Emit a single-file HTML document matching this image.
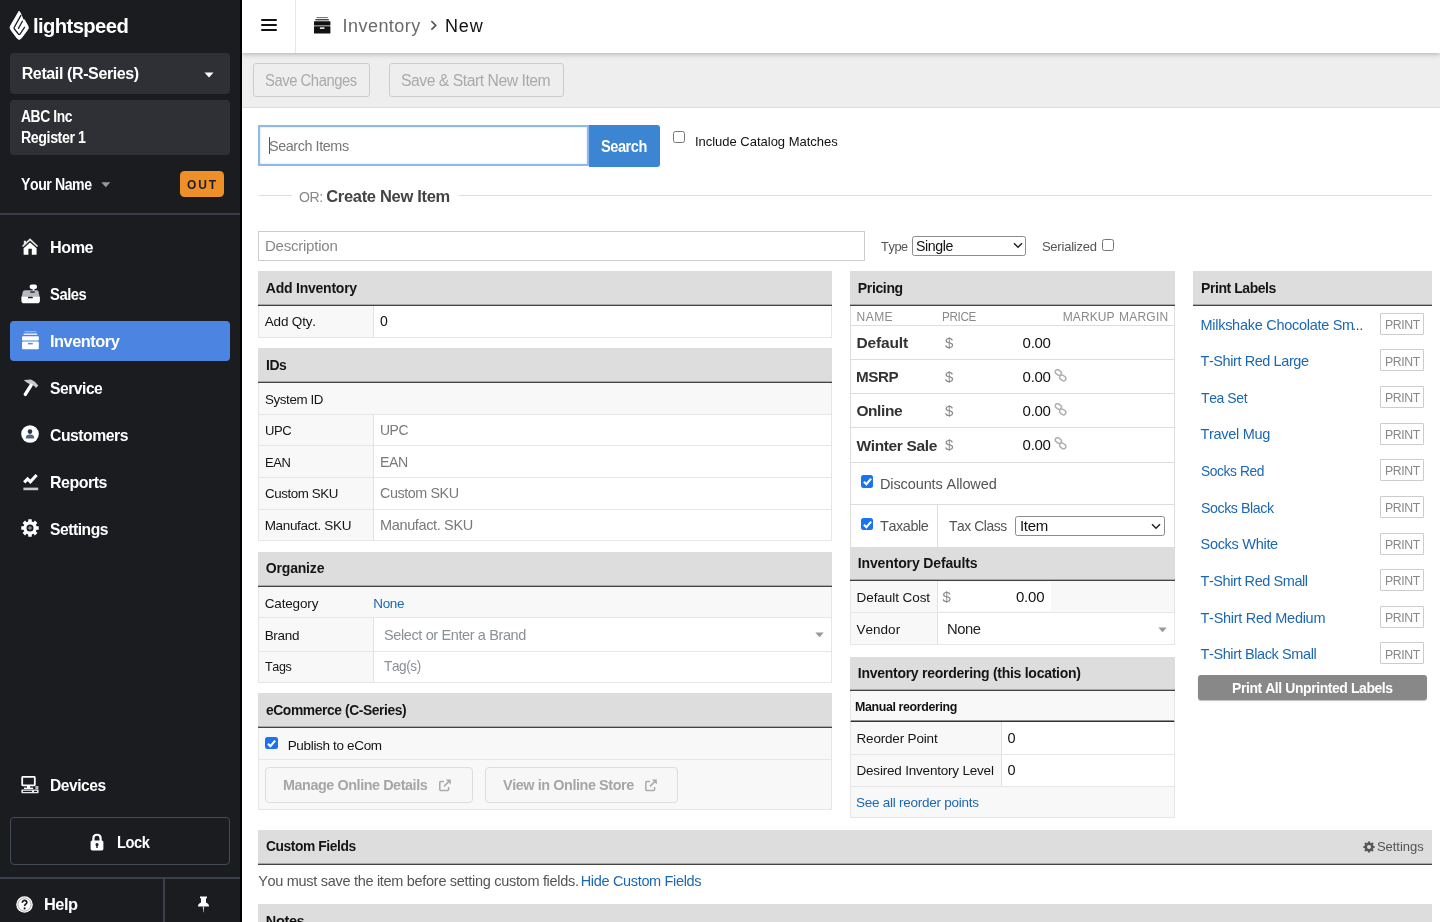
<!DOCTYPE html>
<html lang="en">
<head>
<meta charset="utf-8">
<title>Inventory - New</title>
<style>
*{box-sizing:border-box;margin:0;padding:0}
html,body{width:1440px;height:922px;overflow:hidden;background:#fff}
body{font-family:"Liberation Sans",sans-serif;font-size:14px;color:#222;position:relative}
.t{position:absolute;white-space:nowrap;line-height:1.2;font-kerning:none}
#main{position:absolute;left:0;top:0;width:1440px;height:922px;will-change:transform}
#side{position:absolute;left:0;top:0;width:242px;height:922px;background:#1b1c20;border-right:2px solid #000;color:#fff;z-index:5;will-change:transform}
.hd{background:#ddd;border-bottom:1px solid #444;box-shadow:inset 0 -1px 0 #a8a8a8}
.rw{background:#f8f8f8;border:1px solid #e6e6e6;border-top:none}
</style>
</head>
<body>
<div id="side">
<svg style="position:absolute;left:9px;top:10px" width="21" height="32" viewBox="0 0 21 32"><path d="M10.1,1.2 L1.5,16 Q0.5,17.8 1.7,19.5 L8.2,28.3 Q10.2,30.6 12.2,28.3 L18.7,19.5 Q19.9,17.8 18.9,16 L15.2,9.6 L14.2,10 L11.8,4 Z" fill="#fff" stroke="#fff" stroke-width="1" stroke-linejoin="round"/><path d="M11.9,5.4 L5.2,17.4 Q4.8,18.2 5.4,19 L9.4,24 Q10.3,25 11.2,23.8 L15.5,17.3" fill="none" stroke="#1b1c20" stroke-width="1.25" stroke-linecap="round" stroke-linejoin="round"/><path d="M13.4,11.2 L9.4,18.4" fill="none" stroke="#1b1c20" stroke-width="1.25" stroke-linecap="round"/></svg>
<div class="t" style="left:32.5px;top:13.0px;font-size:21px;letter-spacing:-0.63px;font-weight:bold;color:#fff;transform:scaleX(0.9639);transform-origin:0 0;">lightspeed</div>
<div style="position:absolute;left:10px;top:53px;width:220px;height:41px;background:#2f3035;border-radius:4px"></div>
<div class="t" style="left:21.7px;top:64.0px;font-size:16px;letter-spacing:-0.38px;font-weight:bold;color:#fff;">Retail (R-Series)</div>
<svg style="position:absolute;left:204px;top:72px" width="10" height="6" viewBox="0 0 10 6"><path d="M0.5,0.5 H9.5 L5,5.5 Z" fill="#fff"/></svg>
<div style="position:absolute;left:10px;top:100px;width:220px;height:55px;background:#2f3035;border-radius:4px"></div>
<div class="t" style="left:21.2px;top:107.0px;font-size:16px;letter-spacing:-0.48px;font-weight:bold;color:#fff;transform:scaleX(0.8671);transform-origin:0 0;">ABC Inc</div>
<div class="t" style="left:21.2px;top:128.0px;font-size:16px;letter-spacing:-0.48px;font-weight:bold;color:#fff;transform:scaleX(0.8893);transform-origin:0 0;">Register 1</div>
<div class="t" style="left:21.2px;top:175.0px;font-size:16px;letter-spacing:-0.48px;font-weight:bold;color:#fff;transform:scaleX(0.8806);transform-origin:0 0;">Your Name</div>
<svg style="position:absolute;left:101px;top:182px" width="10" height="6" viewBox="0 0 10 6"><path d="M0.3,0.3 H9.3 L4.8,5.3 Z" fill="#999"/></svg>
<div style="position:absolute;left:180px;top:171px;width:44px;height:26px;background:#ee8f27;border-radius:4.5px"></div>
<div class="t" style="left:187.0px;top:178.0px;font-size:12px;letter-spacing:1.89px;font-weight:bold;color:#1b1e30;">OUT</div>
<div style="position:absolute;left:0px;top:213px;width:240px;height:2px;background:#383c48"></div>
<div style="position:absolute;left:10px;top:321px;width:220px;height:40px;background:#4c85e1;border-radius:4px"></div>
<div class="t" style="left:50.0px;top:238.0px;font-size:17px;letter-spacing:-0.51px;font-weight:bold;color:#fff;transform:scaleX(0.9544);transform-origin:0 0;">Home</div>
<div class="t" style="left:50.0px;top:285.0px;font-size:17px;letter-spacing:-0.51px;font-weight:bold;color:#fff;transform:scaleX(0.8687);transform-origin:0 0;">Sales</div>
<div class="t" style="left:50.0px;top:332.0px;font-size:17px;letter-spacing:-0.51px;font-weight:bold;color:#fff;transform:scaleX(0.9639);transform-origin:0 0;">Inventory</div>
<div class="t" style="left:50.0px;top:379.0px;font-size:17px;letter-spacing:-0.51px;font-weight:bold;color:#fff;transform:scaleX(0.9196);transform-origin:0 0;">Service</div>
<div class="t" style="left:50.0px;top:426.0px;font-size:17px;letter-spacing:-0.51px;font-weight:bold;color:#fff;transform:scaleX(0.9268);transform-origin:0 0;">Customers</div>
<div class="t" style="left:50.0px;top:473.0px;font-size:17px;letter-spacing:-0.51px;font-weight:bold;color:#fff;transform:scaleX(0.9386);transform-origin:0 0;">Reports</div>
<div class="t" style="left:50.0px;top:520.0px;font-size:17px;letter-spacing:-0.51px;font-weight:bold;color:#fff;transform:scaleX(0.9201);transform-origin:0 0;">Settings</div>
<div class="t" style="left:50.0px;top:776.0px;font-size:17px;letter-spacing:-0.51px;font-weight:bold;color:#fff;transform:scaleX(0.9168);transform-origin:0 0;">Devices</div>
<svg style="position:absolute;left:22px;top:238.3px" width="17" height="17" viewBox="0 0 17 17"><path d="M8.05,0.2 L4,4 V2.7 H1.8 V6.1 L0,7.9 L1.1,9.1 L8.05,2.7 L15,9.1 L16.1,7.9 Z" fill="#e4e4e4"/><path d="M8.05,4.4 L1.6,10.3 V16.7 H6.4 V10.7 H9.8 V16.7 H14.6 V10.3 Z" fill="#fff"/></svg>
<svg style="position:absolute;left:20.5px;top:284.4px" width="20" height="20" viewBox="0 0 20 20"><rect x="8.6" y="0.4" width="7.4" height="4.6" rx="2" fill="#fff"/><rect x="11.6" y="4.6" width="1.8" height="2.4" fill="#fff"/><path d="M4.6,6.3 H15.8 Q17.2,6.3 17.5,7.6 L18.6,13 H0.6 L1.9,7.6 Q2.4,6.3 4.6,6.3 Z" fill="#b9b9b9"/><rect x="9.2" y="7.2" width="4.6" height="1.6" rx=".4" fill="#12306a"/><path d="M0.4,12.7 H18.9 V16.4 Q18.9,19.3 16,19.3 H3.3 Q0.4,19.3 0.4,16.4 Z" fill="#fff"/><rect x="7" y="12.7" width="4.8" height="1.5" rx=".5" fill="#1b1c20"/></svg>
<svg style="position:absolute;left:22px;top:330.9px" width="17" height="19" viewBox="0 0 17 19"><rect x="2.6" y="0.2" width="11.6" height="1" fill="#a9c5f3"/><rect x="1.6" y="2.4" width="13.6" height="1.6" fill="#dbe7fb"/><rect x="0" y="5.2" width="16.8" height="4.3" rx="1" fill="#fff"/><rect x="0" y="10.5" width="16.8" height="7.8" rx="1" fill="#fff"/><rect x="6" y="11.9" width="4.8" height="1.5" fill="#5b8fe3"/></svg>
<svg style="position:absolute;left:22px;top:378.5px" width="17" height="18" viewBox="0 0 17 18"><path d="M1.7,1.1 L8.9,0.5 Q11.6,1.6 13.1,3.1 L16.3,6.5 L14.1,9.1 L11.9,6.8 L9.3,5.9 L4.7,3.4 Z" fill="#c9c9c9"/><path d="M3.3,15.4 L9,6.3" fill="none" stroke="#fff" stroke-width="3.4" stroke-linecap="round"/></svg>
<svg style="position:absolute;left:21.2px;top:424.8px" width="18" height="18" viewBox="0 0 18 18"><circle cx="9" cy="9" r="8.8" fill="#fff"/><circle cx="9" cy="6.6" r="2.3" fill="#2b3650"/><path d="M4.8,13.4 C4.8,10.2 6.4,9.4 9,9.4 C11.6,9.4 13.2,10.2 13.2,13.4 Z" fill="#56627e"/></svg>
<svg style="position:absolute;left:22.5px;top:472.5px" width="16" height="18" viewBox="0 0 16 18"><path d="M1.2,9.4 L4.6,6 L7.4,8.8 L13.6,2" fill="none" stroke="#fff" stroke-width="3.1"/><rect x="0.4" y="14.6" width="14.8" height="2.6" fill="#c8c8c8"/></svg>
<svg style="position:absolute;left:21.2px;top:518.5px" width="18" height="18" viewBox="0 0 18 18"><path fill-rule="evenodd" fill="#fff" d="M17.73,7.26 L17.73,10.74 L15.46,10.77 L14.82,12.32 L16.40,13.94 L13.94,16.40 L12.32,14.82 L10.77,15.46 L10.74,17.73 L7.26,17.73 L7.23,15.46 L5.68,14.82 L4.06,16.40 L1.60,13.94 L3.18,12.32 L2.54,10.77 L0.27,10.74 L0.27,7.26 L2.54,7.23 L3.18,5.68 L1.60,4.06 L4.06,1.60 L5.68,3.18 L7.23,2.54 L7.26,0.27 L10.74,0.27 L10.77,2.54 L12.32,3.18 L13.94,1.60 L16.40,4.06 L14.82,5.68 L15.46,7.23 Z M12.50,9.00 A3.5,3.5 0 1,0 5.50,9.00 A3.5,3.5 0 1,0 12.50,9.00 Z"/><circle cx="9" cy="9" r="1.8" fill="#8a8a8a"/></svg>
<svg style="position:absolute;left:21px;top:776px" width="18" height="18" viewBox="0 0 18 18"><rect x="1.2" y="0.8" width="12.6" height="8.6" rx="1" fill="none" stroke="#fff" stroke-width="1.8"/><rect x="6" y="9.6" width="3" height="2.4" fill="#fff"/><rect x="3" y="11.6" width="9" height="1.4" fill="#fff"/><rect x="0.4" y="13.6" width="17.2" height="3.6" rx=".6" fill="#e8e8e8"/><rect x="2" y="14.8" width="9" height="1.2" fill="#1b1c20"/><rect x="13" y="14.8" width="3" height="1.2" fill="#1b1c20"/><rect x="14.4" y="10" width="3" height="3.4" fill="#bbb"/></svg>
<div style="position:absolute;left:10px;top:817px;width:220px;height:48px;border:1px solid #454a58;border-radius:4px"></div>
<svg style="position:absolute;left:89.5px;top:833px" width="14" height="18" viewBox="0 0 14 18"><path d="M3.4,8 V5.2 C3.4,0.6 10.6,0.6 10.6,5.2 V8" fill="none" stroke="#fff" stroke-width="2.2"/><rect x="0.6" y="7.4" width="12.8" height="10" rx="1.6" fill="#fff"/><circle cx="7" cy="11.6" r="1.5" fill="#1b1c20"/><rect x="6.3" y="12" width="1.4" height="3" fill="#1b1c20"/></svg>
<div class="t" style="left:117.2px;top:833.0px;font-size:17px;letter-spacing:-0.51px;font-weight:bold;color:#fff;transform:scaleX(0.8656);transform-origin:0 0;">Lock</div>
<div style="position:absolute;left:0px;top:877px;width:240px;height:2px;background:#3b3f4c"></div>
<div style="position:absolute;left:163px;top:878px;width:2px;height:44px;background:#3b3f4c"></div>
<svg style="position:absolute;left:16px;top:895.5px" width="17" height="17" viewBox="0 0 17 17"><circle cx="8.5" cy="8.5" r="8.3" fill="#fff"/><circle cx="8.5" cy="8.5" r="6.6" fill="none" stroke="#999" stroke-width=".8"/><path d="M6.2,6.8 C6.2,3.6 11,3.8 10.8,6.6 C10.7,8.2 8.6,8.2 8.6,10" fill="none" stroke="#1b1c20" stroke-width="1.7"/><circle cx="8.6" cy="12.4" r="1.05" fill="#1b1c20"/></svg>
<div class="t" style="left:44.1px;top:895.0px;font-size:17px;letter-spacing:-0.51px;font-weight:bold;color:#fff;transform:scaleX(0.9635);transform-origin:0 0;">Help</div>
<svg style="position:absolute;left:197px;top:896px" width="13" height="17" viewBox="0 0 13 17"><path d="M3,0.4 H10 V2.2 H9 V6.6 C10.8,7.4 12,8.6 12,10.4 H1 C1,8.6 2.2,7.4 4,6.6 V2.2 H3 Z" fill="#fff"/><path d="M5.8,10.4 H7.2 L6.7,16.2 H6.3 Z" fill="#ccc"/></svg>
</div>
<div id="main">
<!-- part_top -->
<div style="position:absolute;left:242px;top:53px;width:1198px;height:55px;background:#eee;border-bottom:1px solid #ddd"></div>
<div style="position:absolute;left:242px;top:0px;width:1198px;height:53px;background:#fff;box-shadow:0 1px 5px rgba(0,0,0,.28)"></div>
<div style="position:absolute;left:261px;top:19px;width:16px;height:2px;background:#111;border-radius:1px"></div>
<div style="position:absolute;left:261px;top:24px;width:16px;height:2px;background:#111;border-radius:1px"></div>
<div style="position:absolute;left:261px;top:29px;width:16px;height:2px;background:#111;border-radius:1px"></div>
<div style="position:absolute;left:295px;top:0px;width:1px;height:53px;background:#e6e6e6"></div>
<svg style="position:absolute;left:314px;top:17px" width="17" height="17" viewBox="0 0 17 17"><rect x="2.4" y="0" width="11.4" height="1.1" fill="#777"/><rect x="1.4" y="2" width="13.4" height="1.4" fill="#444"/><rect x="0" y="4.2" width="16.4" height="4.3" rx=".5" fill="#111"/><rect x="0" y="9.2" width="16.4" height="7.2" rx=".5" fill="#111"/><rect x="5.9" y="10.4" width="4.6" height="1.5" fill="#fff"/></svg>
<div class="t" style="left:342.6px;top:16.0px;font-size:18px;letter-spacing:0.44px;color:#6a6a6a;">Inventory</div>
<svg style="position:absolute;left:429.5px;top:20px" width="8" height="11" viewBox="0 0 8 11"><path d="M1.4,1.2 L5.8,5.4 L1.4,9.6" fill="none" stroke="#555" stroke-width="1.6"/></svg>
<div class="t" style="left:444.9px;top:16.0px;font-size:18px;letter-spacing:0.89px;color:#111;">New</div>
<div style="position:absolute;left:253px;top:63px;width:117px;height:34px;border:1px solid #ccc;border-radius:3px;background:#eee"></div>
<div class="t" style="left:264.5px;top:71.0px;font-size:16px;letter-spacing:-0.48px;color:#aaa;transform:scaleX(0.9245);transform-origin:0 0;">Save Changes</div>
<div style="position:absolute;left:389px;top:63px;width:175px;height:34px;border:1px solid #ccc;border-radius:3px;background:#eee"></div>
<div class="t" style="left:401.0px;top:71.0px;font-size:16px;letter-spacing:-0.48px;color:#aaa;transform:scaleX(0.9831);transform-origin:0 0;">Save &amp; Start New Item</div>
<div style="position:absolute;left:258px;top:125px;width:331px;height:41px;background:#fff;border:2px solid #8fb8ea;box-shadow:inset 0 0 2px rgba(143,184,234,.6)"></div>
<div style="position:absolute;left:269px;top:137px;width:1px;height:17px;background:#555"></div>
<div class="t" style="left:269.1px;top:137.0px;font-size:15px;letter-spacing:-0.45px;color:#777;transform:scaleX(0.9602);transform-origin:0 0;">Search Items</div>
<div style="position:absolute;left:589px;top:125px;width:71px;height:42px;background:#3b85d2;border-radius:0 3px 3px 0"></div>
<div class="t" style="left:601.2px;top:137.0px;font-size:16px;letter-spacing:-0.48px;font-weight:bold;color:#fff;transform:scaleX(0.9076);transform-origin:0 0;">Search</div>
<div style="position:absolute;left:673px;top:131px;width:12px;height:12px;border:1px solid #767676;border-radius:2.5px;background:#fff"></div>
<div class="t" style="left:694.9px;top:134.0px;font-size:13px;letter-spacing:-0.01px;color:#111;">Include Catalog Matches</div>
<div style="position:absolute;left:259px;top:195px;width:33px;height:1px;background:#ddd"></div>
<div style="position:absolute;left:459px;top:195px;width:973px;height:1px;background:#ddd"></div>
<div class="t" style="left:299.3px;top:189.0px;font-size:14.5px;letter-spacing:-0.43px;color:#888;transform:scaleX(0.9704);transform-origin:0 0;">OR:</div>
<div class="t" style="left:326.2px;top:187.0px;font-size:16.5px;letter-spacing:-0.31px;font-weight:bold;color:#444;">Create New Item</div>
<div style="position:absolute;left:258px;top:231px;width:607px;height:30px;border:1px solid #ccc;background:#fff"></div>
<div class="t" style="left:264.9px;top:237.0px;font-size:15px;letter-spacing:-0.22px;color:#888;">Description</div>
<div class="t" style="left:881.1px;top:239.0px;font-size:13px;letter-spacing:-0.39px;color:#555;transform:scaleX(0.9802);transform-origin:0 0;">Type</div>
<div style="position:absolute;left:912px;top:236px;width:114px;height:20px;border:1px solid #8c8c8c;border-radius:2.5px;background:#fff"></div>
<div class="t" style="left:915.9px;top:237.0px;font-size:15px;letter-spacing:-0.45px;color:#111;transform:scaleX(0.9455);transform-origin:0 0;">Single</div>
<svg style="position:absolute;left:1012.5px;top:242px" width="10" height="7" viewBox="0 0 10 7"><path d="M1,1.2 L5,5.2 L9,1.2" fill="none" stroke="#222" stroke-width="1.5"/></svg>
<div class="t" style="left:1041.9px;top:239.0px;font-size:13px;letter-spacing:-0.21px;color:#555;">Serialized</div>
<div style="position:absolute;left:1102px;top:239px;width:12px;height:12px;border:1px solid #767676;border-radius:2.5px;background:#fff"></div>
<!-- part_left -->
<div class="hd" style="position:absolute;left:258px;top:271px;width:574px;height:35px;"></div><div class="t" style="left:265.8px;top:280.0px;font-size:14px;letter-spacing:-0.23px;font-weight:bold;color:#151515;">Add Inventory</div>
<div class="rw" style="position:absolute;left:258px;top:306px;width:574px;height:32px;"></div>
<div style="position:absolute;left:373px;top:306px;width:458px;height:31px;background:#fff;border-left:1px solid #e2e2e2"></div>
<div class="t" style="left:264.7px;top:314.0px;font-size:13.5px;letter-spacing:-0.16px;color:#151515;">Add Qty.</div>
<div class="t" style="left:379.9px;top:313.0px;font-size:14px;letter-spacing:0.45px;color:#111;">0</div>
<div class="hd" style="position:absolute;left:258px;top:348px;width:574px;height:35px;"></div><div class="t" style="left:265.8px;top:357.0px;font-size:14px;letter-spacing:-0.42px;font-weight:bold;color:#151515;transform:scaleX(0.9949);transform-origin:0 0;">IDs</div>
<div class="rw" style="position:absolute;left:258px;top:383px;width:574px;height:32px;"></div>
<div class="t" style="left:264.7px;top:392.0px;font-size:13.5px;letter-spacing:-0.40px;color:#151515;transform:scaleX(0.9897);transform-origin:0 0;">System ID</div>
<div class="rw" style="position:absolute;left:258px;top:415px;width:574px;height:31px;"></div>
<div class="t" style="left:264.7px;top:423.0px;font-size:13.5px;letter-spacing:-0.40px;color:#151515;transform:scaleX(0.9645);transform-origin:0 0;">UPC</div>
<div style="position:absolute;left:373px;top:415px;width:458px;height:30px;background:#fff;border-left:1px solid #e2e2e2"></div>
<div class="t" style="left:380.0px;top:422.0px;font-size:14.5px;letter-spacing:-0.43px;color:#7a7a7a;transform:scaleX(0.9571);transform-origin:0 0;">UPC</div>
<div class="rw" style="position:absolute;left:258px;top:446px;width:574px;height:32px;"></div>
<div class="t" style="left:264.7px;top:455.0px;font-size:13.5px;letter-spacing:-0.40px;color:#151515;transform:scaleX(0.9614);transform-origin:0 0;">EAN</div>
<div style="position:absolute;left:373px;top:446px;width:458px;height:31px;background:#fff;border-left:1px solid #e2e2e2"></div>
<div class="t" style="left:380.0px;top:454.0px;font-size:14.5px;letter-spacing:-0.43px;color:#7a7a7a;transform:scaleX(0.9732);transform-origin:0 0;">EAN</div>
<div class="rw" style="position:absolute;left:258px;top:478px;width:574px;height:32px;"></div>
<div class="t" style="left:264.7px;top:486.0px;font-size:13.5px;letter-spacing:-0.40px;color:#151515;transform:scaleX(0.9870);transform-origin:0 0;">Custom SKU</div>
<div style="position:absolute;left:373px;top:478px;width:458px;height:31px;background:#fff;border-left:1px solid #e2e2e2"></div>
<div class="t" style="left:380.0px;top:485.0px;font-size:14.5px;letter-spacing:-0.43px;color:#7a7a7a;transform:scaleX(0.9885);transform-origin:0 0;">Custom SKU</div>
<div class="rw" style="position:absolute;left:258px;top:510px;width:574px;height:31px;"></div>
<div class="t" style="left:264.7px;top:518.0px;font-size:13.5px;letter-spacing:-0.34px;color:#151515;">Manufact. SKU</div>
<div style="position:absolute;left:373px;top:510px;width:458px;height:30px;background:#fff;border-left:1px solid #e2e2e2"></div>
<div class="t" style="left:380.0px;top:517.0px;font-size:14.5px;letter-spacing:-0.36px;color:#7a7a7a;">Manufact. SKU</div>
<div class="hd" style="position:absolute;left:258px;top:552px;width:574px;height:35px;"></div><div class="t" style="left:265.8px;top:560.0px;font-size:14px;letter-spacing:-0.18px;font-weight:bold;color:#151515;">Organize</div>
<div class="rw" style="position:absolute;left:258px;top:587px;width:574px;height:31px;"></div>
<div class="t" style="left:264.7px;top:596.0px;font-size:13.5px;letter-spacing:-0.15px;color:#151515;">Category</div>
<div class="t" style="left:373.2px;top:596.0px;font-size:13.5px;letter-spacing:-0.29px;color:#1c67b3;">None</div>
<div class="rw" style="position:absolute;left:258px;top:618px;width:574px;height:34px;"></div>
<div style="position:absolute;left:373px;top:618px;width:458px;height:33px;background:#fff;border-left:1px solid #e2e2e2"></div>
<div class="t" style="left:264.7px;top:628.0px;font-size:13.5px;letter-spacing:-0.33px;color:#151515;">Brand</div>
<div class="t" style="left:384.0px;top:627.0px;font-size:14.5px;letter-spacing:-0.38px;color:#8a9098;">Select or Enter a Brand</div>
<svg style="position:absolute;left:814.5px;top:631.5px" width="9" height="6" viewBox="0 0 9 6"><path d="M0.3,0.5 H8.7 L4.5,5.3 Z" fill="#999"/></svg>
<div class="rw" style="position:absolute;left:258px;top:652px;width:574px;height:31px;"></div>
<div style="position:absolute;left:373px;top:652px;width:458px;height:30px;background:#fff;border-left:1px solid #e2e2e2"></div>
<div class="t" style="left:264.7px;top:659.0px;font-size:13.5px;letter-spacing:-0.40px;color:#151515;transform:scaleX(0.9307);transform-origin:0 0;">Tags</div>
<div class="t" style="left:384.0px;top:658.0px;font-size:14.5px;letter-spacing:-0.43px;color:#8a9098;transform:scaleX(0.9359);transform-origin:0 0;">Tag(s)</div>
<div class="hd" style="position:absolute;left:258px;top:693px;width:574px;height:35px;"></div><div class="t" style="left:265.8px;top:702.0px;font-size:14px;letter-spacing:-0.42px;font-weight:bold;color:#151515;transform:scaleX(0.9891);transform-origin:0 0;">eCommerce (C-Series)</div>
<div class="rw" style="position:absolute;left:258px;top:728px;width:574px;height:32px;"></div>
<div style="position:absolute;left:265px;top:737px;width:13px;height:12px;background:#1a73f0;border-radius:2.5px"><svg width="13" height="13" viewBox="0 0 13 13" style="position:absolute;left:0;top:0"><path d="M2.9,6.7 L5.4,9.1 L10.1,3.6" fill="none" stroke="#fff" stroke-width="2.1"/></svg></div>
<div class="t" style="left:287.7px;top:738.0px;font-size:13.5px;letter-spacing:-0.33px;color:#151515;">Publish to eCom</div>
<div class="rw" style="position:absolute;left:258px;top:760px;width:574px;height:50px;"></div>
<div style="position:absolute;left:265px;top:767px;width:208px;height:36px;border:1px solid #ddd;border-radius:4px;background:#f7f7f7"></div>
<div class="t" style="left:283.4px;top:776.0px;font-size:15px;letter-spacing:-0.45px;font-weight:bold;color:#a6a6a6;transform:scaleX(0.9580);transform-origin:0 0;">Manage Online Details</div>
<svg style="position:absolute;left:438.8px;top:779px" width="13" height="13" viewBox="0 0 13 13"><path d="M5,2.6 H1.6 Q0.8,2.6 0.8,3.4 V10.6 Q0.8,11.4 1.6,11.4 H8.8 Q9.6,11.4 9.6,10.6 V8" fill="none" stroke="#aaa" stroke-width="1.5"/><path d="M5,7.4 L10.6,1.8" fill="none" stroke="#aaa" stroke-width="1.6"/><path d="M6.8,0.6 H11.8 V5.6 Z" fill="#aaa"/></svg>
<div style="position:absolute;left:485px;top:767px;width:193px;height:36px;border:1px solid #ddd;border-radius:4px;background:#f7f7f7"></div>
<div class="t" style="left:503.1px;top:776.0px;font-size:15px;letter-spacing:-0.45px;font-weight:bold;color:#a6a6a6;transform:scaleX(0.9618);transform-origin:0 0;">View in Online Store</div>
<svg style="position:absolute;left:644.8px;top:779px" width="13" height="13" viewBox="0 0 13 13"><path d="M5,2.6 H1.6 Q0.8,2.6 0.8,3.4 V10.6 Q0.8,11.4 1.6,11.4 H8.8 Q9.6,11.4 9.6,10.6 V8" fill="none" stroke="#aaa" stroke-width="1.5"/><path d="M5,7.4 L10.6,1.8" fill="none" stroke="#aaa" stroke-width="1.6"/><path d="M6.8,0.6 H11.8 V5.6 Z" fill="#aaa"/></svg>
<div class="hd" style="position:absolute;left:258px;top:830px;width:1174px;height:35px;"></div><div class="t" style="left:265.8px;top:838.0px;font-size:14px;letter-spacing:-0.42px;font-weight:bold;color:#151515;transform:scaleX(0.9860);transform-origin:0 0;">Custom Fields</div>
<svg style="position:absolute;left:1362.5px;top:840.5px" width="12" height="12" viewBox="0 0 12 12"><path fill-rule="evenodd" fill="#555" d="M11.59,4.89 L11.59,7.11 L10.15,7.13 L9.74,8.13 L10.74,9.17 L9.17,10.74 L8.13,9.74 L7.13,10.15 L7.11,11.59 L4.89,11.59 L4.87,10.15 L3.87,9.74 L2.83,10.74 L1.26,9.17 L2.26,8.13 L1.85,7.13 L0.41,7.11 L0.41,4.89 L1.85,4.87 L2.26,3.87 L1.26,2.83 L2.83,1.26 L3.87,2.26 L4.87,1.85 L4.89,0.41 L7.11,0.41 L7.13,1.85 L8.13,2.26 L9.17,1.26 L10.74,2.83 L9.74,3.87 L10.15,4.87 Z M8.00,6.00 A2,2 0 1,0 4.00,6.00 A2,2 0 1,0 8.00,6.00 Z"/></svg>
<div class="t" style="left:1376.9px;top:839.0px;font-size:13px;letter-spacing:-0.01px;color:#555;">Settings</div>
<div class="t" style="left:258.2px;top:873.0px;font-size:14.5px;letter-spacing:-0.30px;color:#555;">You must save the item before setting custom fields.</div>
<div class="t" style="left:580.7px;top:873.0px;font-size:14.5px;letter-spacing:-0.33px;color:#1c67b3;">Hide Custom Fields</div>
<div class="hd" style="position:absolute;left:258px;top:904px;width:1174px;height:35px;"></div>
<div class="t" style="left:265.8px;top:913.0px;font-size:14.5px;letter-spacing:-0.35px;font-weight:bold;color:#111;">Notes</div>
<!-- part_mid -->
<div class="hd" style="position:absolute;left:850px;top:271px;width:325px;height:35px;"></div><div class="t" style="left:857.8px;top:280.0px;font-size:14px;letter-spacing:-0.35px;font-weight:bold;color:#151515;">Pricing</div>
<div style="position:absolute;left:850px;top:306px;width:325px;height:241px;background:#fff;border-left:1px solid #ddd;border-right:1px solid #ddd"></div>
<div class="t" style="left:856.6px;top:310.0px;font-size:12px;letter-spacing:0.45px;color:#8a8a8a;">NAME</div>
<div class="t" style="left:942.1px;top:310.0px;font-size:12px;letter-spacing:-0.36px;color:#8a8a8a;transform:scaleX(0.9740);transform-origin:0 0;">PRICE</div>
<div class="t" style="left:1062.8px;top:310.0px;font-size:12px;letter-spacing:0.06px;color:#8a8a8a;">MARKUP</div>
<div class="t" style="left:1119.1px;top:310.0px;font-size:12px;letter-spacing:0.20px;color:#8a8a8a;">MARGIN</div>
<div style="position:absolute;left:850px;top:325px;width:325px;height:1px;background:#ddd"></div>
<div style="position:absolute;left:850px;top:359px;width:325px;height:1px;background:#ddd"></div>
<div style="position:absolute;left:850px;top:393px;width:325px;height:1px;background:#ddd"></div>
<div style="position:absolute;left:850px;top:427px;width:325px;height:1px;background:#ddd"></div>
<div style="position:absolute;left:850px;top:462px;width:325px;height:1px;background:#ddd"></div>
<div style="position:absolute;left:850px;top:504px;width:325px;height:1px;background:#ddd"></div>
<div class="t" style="left:856.4px;top:334.0px;font-size:15.5px;letter-spacing:-0.13px;font-weight:bold;color:#333;">Default</div>
<div class="t" style="left:945.0px;top:334.0px;font-size:15px;letter-spacing:-0.14px;color:#888;">$</div>
<div class="t" style="left:1022.6px;top:334.0px;font-size:15px;letter-spacing:-0.30px;color:#111;">0.00</div>
<div class="t" style="left:856.4px;top:368.0px;font-size:15.5px;letter-spacing:-0.46px;font-weight:bold;color:#333;transform:scaleX(0.9802);transform-origin:0 0;">MSRP</div>
<div class="t" style="left:945.0px;top:368.0px;font-size:15px;letter-spacing:-0.14px;color:#888;">$</div>
<div class="t" style="left:1022.6px;top:368.0px;font-size:15px;letter-spacing:-0.30px;color:#111;">0.00</div>
<svg style="position:absolute;left:1053.5px;top:369.0px" width="13" height="13" viewBox="0 0 13 13"><g fill="none" stroke="#b0b0b0" stroke-width="1.5"><rect x="1" y="1.2" width="6.6" height="4.6" rx="2.3" transform="rotate(38 4.3 3.5)"/><rect x="5.4" y="6.6" width="6.6" height="4.6" rx="2.3" transform="rotate(38 8.7 8.9)"/></g></svg>
<div class="t" style="left:856.4px;top:402.0px;font-size:15.5px;letter-spacing:-0.40px;font-weight:bold;color:#333;">Online</div>
<div class="t" style="left:945.0px;top:402.0px;font-size:15px;letter-spacing:-0.14px;color:#888;">$</div>
<div class="t" style="left:1022.6px;top:402.0px;font-size:15px;letter-spacing:-0.30px;color:#111;">0.00</div>
<svg style="position:absolute;left:1053.5px;top:403.1px" width="13" height="13" viewBox="0 0 13 13"><g fill="none" stroke="#b0b0b0" stroke-width="1.5"><rect x="1" y="1.2" width="6.6" height="4.6" rx="2.3" transform="rotate(38 4.3 3.5)"/><rect x="5.4" y="6.6" width="6.6" height="4.6" rx="2.3" transform="rotate(38 8.7 8.9)"/></g></svg>
<div class="t" style="left:856.4px;top:437.0px;font-size:15.5px;letter-spacing:-0.35px;font-weight:bold;color:#333;">Winter Sale</div>
<div class="t" style="left:945.0px;top:436.0px;font-size:15px;letter-spacing:-0.14px;color:#888;">$</div>
<div class="t" style="left:1022.6px;top:436.0px;font-size:15px;letter-spacing:-0.30px;color:#111;">0.00</div>
<svg style="position:absolute;left:1053.5px;top:437.3px" width="13" height="13" viewBox="0 0 13 13"><g fill="none" stroke="#b0b0b0" stroke-width="1.5"><rect x="1" y="1.2" width="6.6" height="4.6" rx="2.3" transform="rotate(38 4.3 3.5)"/><rect x="5.4" y="6.6" width="6.6" height="4.6" rx="2.3" transform="rotate(38 8.7 8.9)"/></g></svg>
<div style="position:absolute;left:861px;top:475px;width:12px;height:13px;background:#1a73f0;border-radius:2.5px"><svg width="13" height="13" viewBox="0 0 13 13" style="position:absolute;left:0;top:0"><path d="M2.9,6.7 L5.4,9.1 L10.1,3.6" fill="none" stroke="#fff" stroke-width="2.1"/></svg></div>
<div class="t" style="left:880.0px;top:476.0px;font-size:14.5px;letter-spacing:-0.11px;color:#555;">Discounts Allowed</div>
<div style="position:absolute;left:861px;top:518px;width:12px;height:12px;background:#1a73f0;border-radius:2.5px"><svg width="13" height="13" viewBox="0 0 13 13" style="position:absolute;left:0;top:0"><path d="M2.9,6.7 L5.4,9.1 L10.1,3.6" fill="none" stroke="#fff" stroke-width="2.1"/></svg></div>
<div class="t" style="left:880.0px;top:518.0px;font-size:14.5px;letter-spacing:-0.43px;color:#555;transform:scaleX(0.9958);transform-origin:0 0;">Taxable</div>
<div style="position:absolute;left:937px;top:505px;width:1px;height:42px;background:#ddd"></div>
<div class="t" style="left:948.5px;top:518.0px;font-size:14.5px;letter-spacing:-0.43px;color:#555;transform:scaleX(0.9545);transform-origin:0 0;">Tax Class</div>
<div style="position:absolute;left:1015px;top:516px;width:150px;height:20px;border:1px solid #8c8c8c;border-radius:2.5px;background:#fff"></div>
<div class="t" style="left:1020.0px;top:517.0px;font-size:15px;letter-spacing:-0.32px;color:#111;">Item</div>
<svg style="position:absolute;left:1151px;top:522.5px" width="10" height="7" viewBox="0 0 10 7"><path d="M1,1.2 L5,5.2 L9,1.2" fill="none" stroke="#222" stroke-width="1.5"/></svg>
<div class="hd" style="position:absolute;left:850px;top:547px;width:325px;height:34px;"></div><div class="t" style="left:857.8px;top:555.0px;font-size:14px;letter-spacing:-0.14px;font-weight:bold;color:#151515;">Inventory Defaults</div>
<div class="rw" style="position:absolute;left:850px;top:581px;width:325px;height:32px;"></div>
<div style="position:absolute;left:937px;top:581px;width:1px;height:31px;background:#e2e2e2"></div>
<div style="position:absolute;left:938px;top:582px;width:113px;height:29px;background:#fff"></div>
<div class="t" style="left:856.5px;top:590.0px;font-size:13.5px;letter-spacing:-0.06px;color:#151515;">Default Cost</div>
<div class="t" style="left:942.5px;top:588.0px;font-size:15px;letter-spacing:-0.14px;color:#888;">$</div>
<div class="t" style="left:1015.9px;top:588.0px;font-size:15px;letter-spacing:-0.20px;color:#111;">0.00</div>
<div class="rw" style="position:absolute;left:850px;top:613px;width:325px;height:32px;"></div>
<div style="position:absolute;left:937px;top:613px;width:237px;height:31px;background:#fff;border-left:1px solid #e2e2e2"></div>
<div class="t" style="left:856.5px;top:622.0px;font-size:13.5px;letter-spacing:0.02px;color:#151515;">Vendor</div>
<div class="t" style="left:947.4px;top:620.0px;font-size:15.5px;letter-spacing:-0.46px;color:#222;transform:scaleX(0.9543);transform-origin:0 0;">None</div>
<svg style="position:absolute;left:1158px;top:627.3px" width="9" height="6" viewBox="0 0 9 6"><path d="M0.3,0.5 H8.7 L4.5,5.3 Z" fill="#999"/></svg>
<div class="hd" style="position:absolute;left:850px;top:657px;width:325px;height:34px;"></div><div class="t" style="left:857.8px;top:665.0px;font-size:14px;letter-spacing:-0.27px;font-weight:bold;color:#151515;">Inventory reordering (this location)</div>
<div style="position:absolute;left:850px;top:691px;width:325px;height:31px;background:#f8f8f8;border-bottom:1px solid #333;box-shadow:inset 0 -1px 0 #8f8f8f;border-left:1px solid #e6e6e6;border-right:1px solid #e6e6e6"></div>
<div class="t" style="left:855.4px;top:699.0px;font-size:13px;letter-spacing:-0.39px;font-weight:bold;color:#111;transform:scaleX(0.9544);transform-origin:0 0;">Manual reordering</div>
<div class="rw" style="position:absolute;left:850px;top:722px;width:325px;height:33px;"></div>
<div style="position:absolute;left:1001px;top:722px;width:173px;height:32px;background:#fff;border-left:1px solid #e2e2e2"></div>
<div class="t" style="left:856.5px;top:731.0px;font-size:13.5px;letter-spacing:-0.18px;color:#151515;">Reorder Point</div>
<div class="t" style="left:1007.5px;top:730.0px;font-size:14.5px;letter-spacing:0.11px;color:#111;">0</div>
<div class="rw" style="position:absolute;left:850px;top:755px;width:325px;height:32px;"></div>
<div style="position:absolute;left:1001px;top:755px;width:173px;height:31px;background:#fff;border-left:1px solid #e2e2e2"></div>
<div class="t" style="left:856.5px;top:763.0px;font-size:13.5px;letter-spacing:-0.20px;color:#151515;">Desired Inventory Level</div>
<div class="t" style="left:1007.5px;top:762.0px;font-size:14.5px;letter-spacing:0.11px;color:#111;">0</div>
<div class="rw" style="position:absolute;left:850px;top:787px;width:325px;height:31px;"></div>
<div class="t" style="left:856.0px;top:795.0px;font-size:13.5px;letter-spacing:-0.25px;color:#1c67b3;">See all reorder points</div>
<!-- part_right -->
<div class="hd" style="position:absolute;left:1193px;top:271px;width:239px;height:35px;"></div><div class="t" style="left:1200.8px;top:280.0px;font-size:14px;letter-spacing:-0.42px;font-weight:bold;color:#151515;transform:scaleX(0.9977);transform-origin:0 0;">Print Labels</div>
<div class="t" style="left:1200.5px;top:317.0px;font-size:14.5px;letter-spacing:-0.28px;color:#1c67b3;">Milkshake Chocolate Sm</div>
<div class="t" style="left:1352.3px;top:317.0px;font-size:14.5px;letter-spacing:-3.33px;color:#222;transform:scaleX(.78);transform-origin:0 0;">…</div>
<div style="position:absolute;left:1380px;top:313px;width:44px;height:22px;border:1px solid #ccc;background:#fff;border-radius:1px"></div>
<div class="t" style="left:1384.6px;top:318.0px;font-size:12.5px;letter-spacing:-0.38px;color:#888;transform:scaleX(0.9819);transform-origin:0 0;">PRINT</div>
<div class="t" style="left:1200.5px;top:353.0px;font-size:14.5px;letter-spacing:-0.42px;color:#1c67b3;">T-Shirt Red Large</div>
<div style="position:absolute;left:1380px;top:349px;width:44px;height:22px;border:1px solid #ccc;background:#fff;border-radius:1px"></div>
<div class="t" style="left:1384.6px;top:355.0px;font-size:12.5px;letter-spacing:-0.38px;color:#888;transform:scaleX(0.9819);transform-origin:0 0;">PRINT</div>
<div class="t" style="left:1200.5px;top:390.0px;font-size:14.5px;letter-spacing:-0.43px;color:#1c67b3;transform:scaleX(0.9658);transform-origin:0 0;">Tea Set</div>
<div style="position:absolute;left:1380px;top:386px;width:44px;height:22px;border:1px solid #ccc;background:#fff;border-radius:1px"></div>
<div class="t" style="left:1384.6px;top:391.0px;font-size:12.5px;letter-spacing:-0.38px;color:#888;transform:scaleX(0.9819);transform-origin:0 0;">PRINT</div>
<div class="t" style="left:1200.5px;top:426.0px;font-size:14.5px;letter-spacing:-0.31px;color:#1c67b3;">Travel Mug</div>
<div style="position:absolute;left:1380px;top:423px;width:44px;height:22px;border:1px solid #ccc;background:#fff;border-radius:1px"></div>
<div class="t" style="left:1384.6px;top:428.0px;font-size:12.5px;letter-spacing:-0.38px;color:#888;transform:scaleX(0.9819);transform-origin:0 0;">PRINT</div>
<div class="t" style="left:1200.5px;top:463.0px;font-size:14.5px;letter-spacing:-0.43px;color:#1c67b3;transform:scaleX(0.9510);transform-origin:0 0;">Socks Red</div>
<div style="position:absolute;left:1380px;top:459px;width:44px;height:22px;border:1px solid #ccc;background:#fff;border-radius:1px"></div>
<div class="t" style="left:1384.6px;top:464.0px;font-size:12.5px;letter-spacing:-0.38px;color:#888;transform:scaleX(0.9819);transform-origin:0 0;">PRINT</div>
<div class="t" style="left:1200.5px;top:500.0px;font-size:14.5px;letter-spacing:-0.43px;color:#1c67b3;transform:scaleX(0.9779);transform-origin:0 0;">Socks Black</div>
<div style="position:absolute;left:1380px;top:496px;width:44px;height:22px;border:1px solid #ccc;background:#fff;border-radius:1px"></div>
<div class="t" style="left:1384.6px;top:501.0px;font-size:12.5px;letter-spacing:-0.38px;color:#888;transform:scaleX(0.9819);transform-origin:0 0;">PRINT</div>
<div class="t" style="left:1200.5px;top:536.0px;font-size:14.5px;letter-spacing:-0.29px;color:#1c67b3;">Socks White</div>
<div style="position:absolute;left:1380px;top:533px;width:44px;height:22px;border:1px solid #ccc;background:#fff;border-radius:1px"></div>
<div class="t" style="left:1384.6px;top:538.0px;font-size:12.5px;letter-spacing:-0.38px;color:#888;transform:scaleX(0.9819);transform-origin:0 0;">PRINT</div>
<div class="t" style="left:1200.5px;top:573.0px;font-size:14.5px;letter-spacing:-0.43px;color:#1c67b3;">T-Shirt Red Small</div>
<div style="position:absolute;left:1380px;top:569px;width:44px;height:22px;border:1px solid #ccc;background:#fff;border-radius:1px"></div>
<div class="t" style="left:1384.6px;top:574.0px;font-size:12.5px;letter-spacing:-0.38px;color:#888;transform:scaleX(0.9819);transform-origin:0 0;">PRINT</div>
<div class="t" style="left:1200.5px;top:610.0px;font-size:14.5px;letter-spacing:-0.28px;color:#1c67b3;">T-Shirt Red Medium</div>
<div style="position:absolute;left:1380px;top:606px;width:44px;height:22px;border:1px solid #ccc;background:#fff;border-radius:1px"></div>
<div class="t" style="left:1384.6px;top:611.0px;font-size:12.5px;letter-spacing:-0.38px;color:#888;transform:scaleX(0.9819);transform-origin:0 0;">PRINT</div>
<div class="t" style="left:1200.5px;top:646.0px;font-size:14.5px;letter-spacing:-0.39px;color:#1c67b3;">T-Shirt Black Small</div>
<div style="position:absolute;left:1380px;top:642px;width:44px;height:22px;border:1px solid #ccc;background:#fff;border-radius:1px"></div>
<div class="t" style="left:1384.6px;top:648.0px;font-size:12.5px;letter-spacing:-0.38px;color:#888;transform:scaleX(0.9819);transform-origin:0 0;">PRINT</div>
<div style="position:absolute;left:1198px;top:675px;width:229px;height:25px;background:#888;border-radius:3px;box-shadow:0 1px 1px rgba(0,0,0,.25)"></div>
<div class="t" style="left:1231.9px;top:680.0px;font-size:14.5px;letter-spacing:-0.43px;font-weight:bold;color:#fff;transform:scaleX(0.9630);transform-origin:0 0;">Print All Unprinted Labels</div>
</div>
</body>
</html>
